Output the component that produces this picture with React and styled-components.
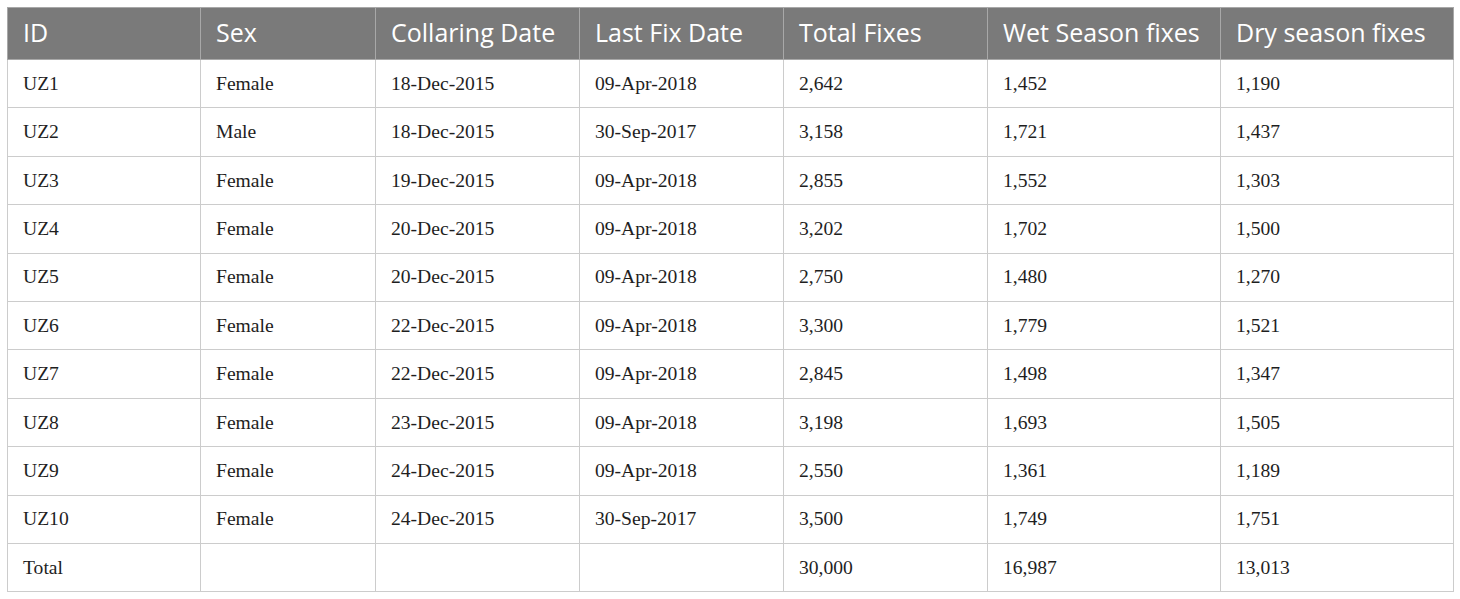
import React from "react";
import styled, { createGlobalStyle } from "styled-components";

const GlobalStyle = createGlobalStyle`
  body {
    margin: 0;
    background: #ffffff;
  }
`;

const Page = styled.div`
  padding: 7px 7px 0 7px;
`;

const Table = styled.table`
  width: 1446px;
  border-collapse: collapse;
  table-layout: fixed;
  border: 1px solid #cccccc;
`;

const HeadCell = styled.th`
  height: 49px;
  padding: 0 0 2px 15px;
  text-align: left;
  font-family: "Open Sans", "Noto Sans", sans-serif;
  font-weight: 400;
  font-size: 25px;
  line-height: 1;
  color: #ffffff;
  background: #7a7a7a;
  border: 1px solid #a8a8a8;
  white-space: nowrap;
`;

const Cell = styled.td`
  height: 47.4px;
  padding: 0 0 0 15px;
  font-family: "Liberation Serif", "Times New Roman", serif;
  font-size: 19.6px;
  line-height: 1;
  color: #1e1e1e;
  border: 1px solid #cccccc;
  white-space: nowrap;
`;

const columns = [
  { label: "ID", width: 193 },
  { label: "Sex", width: 175 },
  { label: "Collaring Date", width: 204 },
  { label: "Last Fix Date", width: 204 },
  { label: "Total Fixes", width: 204 },
  { label: "Wet Season fixes", width: 233 },
  { label: "Dry season fixes", width: 233 },
];

const rows = [
  ["UZ1", "Female", "18-Dec-2015", "09-Apr-2018", "2,642", "1,452", "1,190"],
  ["UZ2", "Male", "18-Dec-2015", "30-Sep-2017", "3,158", "1,721", "1,437"],
  ["UZ3", "Female", "19-Dec-2015", "09-Apr-2018", "2,855", "1,552", "1,303"],
  ["UZ4", "Female", "20-Dec-2015", "09-Apr-2018", "3,202", "1,702", "1,500"],
  ["UZ5", "Female", "20-Dec-2015", "09-Apr-2018", "2,750", "1,480", "1,270"],
  ["UZ6", "Female", "22-Dec-2015", "09-Apr-2018", "3,300", "1,779", "1,521"],
  ["UZ7", "Female", "22-Dec-2015", "09-Apr-2018", "2,845", "1,498", "1,347"],
  ["UZ8", "Female", "23-Dec-2015", "09-Apr-2018", "3,198", "1,693", "1,505"],
  ["UZ9", "Female", "24-Dec-2015", "09-Apr-2018", "2,550", "1,361", "1,189"],
  ["UZ10", "Female", "24-Dec-2015", "30-Sep-2017", "3,500", "1,749", "1,751"],
  ["Total", "", "", "", "30,000", "16,987", "13,013"],
];

const App = () => (
  <Page>
    <GlobalStyle />
    <Table>
      <colgroup>
        {columns.map((c) => (
          <col key={c.label} style={{ width: c.width }} />
        ))}
      </colgroup>
      <thead>
        <tr>
          {columns.map((c) => (
            <HeadCell key={c.label}>{c.label}</HeadCell>
          ))}
        </tr>
      </thead>
      <tbody>
        {rows.map((r) => (
          <tr key={r[0]}>
            {r.map((v, i) => (
              <Cell key={i}>{v}</Cell>
            ))}
          </tr>
        ))}
      </tbody>
    </Table>
  </Page>
);

export default App;
